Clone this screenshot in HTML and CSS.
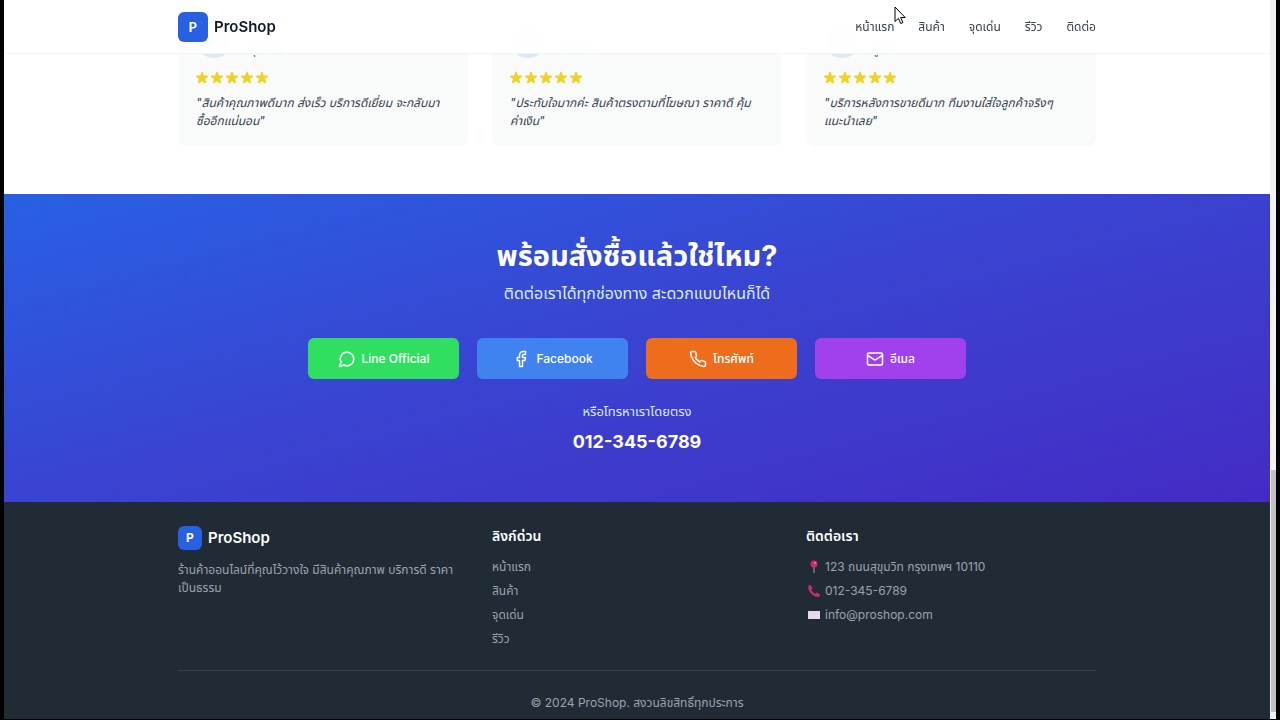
FILE: index.html
```html
<!DOCTYPE html>
<html lang="th">
<head>
<meta charset="utf-8">
<meta name="viewport" content="width=device-width, initial-scale=1">
<title>ProShop</title>
<link rel="stylesheet" href="styles.css">
</head>
<body>
<svg class="defs" aria-hidden="true">
  <symbol id="star" viewBox="1.5 1.5 17 17"><path d="M9.05 2.93c.3-.92 1.6-.92 1.9 0l1.07 3.29a1 1 0 0 0 .95.69h3.46c.97 0 1.37 1.24.59 1.81l-2.8 2.03a1 1 0 0 0-.36 1.12l1.07 3.29c.3.92-.76 1.69-1.54 1.12l-2.8-2.03a1 1 0 0 0-1.18 0l-2.8 2.03c-.78.57-1.83-.2-1.54-1.12l1.07-3.29a1 1 0 0 0-.36-1.12L2.98 8.72c-.78-.57-.38-1.81.59-1.81h3.46a1 1 0 0 0 .95-.69z"/></symbol>
</svg>
<div class="frame">
  <div class="page">
    <header class="header">
      <div class="container header-row">
        <a class="brand" href="#"><span class="mark">P</span><span>ProShop</span></a>
        <nav class="nav">
          <a href="#">หน้าแรก</a><a href="#">สินค้า</a><a href="#">จุดเด่น</a><a href="#">รีวิว</a><a href="#">ติดต่อ</a>
        </nav>
      </div>
    </header>
    <main>
      <section class="reviews">
        <div class="container cards">
          <article class="card">
            <div class="person"><span class="avatar"></span><span class="place">กรุงเทพฯ</span></div>
            <div class="stars"><svg><use href="#star"/></svg><svg><use href="#star"/></svg><svg><use href="#star"/></svg><svg><use href="#star"/></svg><svg><use href="#star"/></svg></div>
            <p class="quote">"สินค้าคุณภาพดีมาก ส่งเร็ว บริการดีเยี่ยม จะกลับมาซื้ออีกแน่นอน"</p>
          </article>
          <article class="card">
            <div class="person"><span class="avatar"></span><span class="place">เชียงใหม่</span></div>
            <div class="stars"><svg><use href="#star"/></svg><svg><use href="#star"/></svg><svg><use href="#star"/></svg><svg><use href="#star"/></svg><svg><use href="#star"/></svg></div>
            <p class="quote">"ประทับใจมากค่ะ สินค้าตรงตามที่โฆษณา ราคาดี คุ้ม<wbr><span class="keep">ค่าเงิน"</span></p>
          </article>
          <article class="card">
            <div class="person"><span class="avatar"></span><span class="place">ภูเก็ต</span></div>
            <div class="stars"><svg><use href="#star"/></svg><svg><use href="#star"/></svg><svg><use href="#star"/></svg><svg><use href="#star"/></svg><svg><use href="#star"/></svg></div>
            <p class="quote">"บริการหลังการขายดีมาก ทีมงานใส่ใจลูกค้าจริงๆ แนะนำเลย"</p>
          </article>
        </div>
      </section>
      <section class="cta">
        <h2>พร้อมสั่งซื้อแล้วใช่ไหม?</h2>
        <p class="lead">ติดต่อเราได้ทุกช่องทาง สะดวกแบบไหนก็ได้</p>
        <div class="channels">
          <a class="channel line" href="#"><svg viewBox="0 0 24 24"><path d="M7.9 20A9 9 0 1 0 4 16.1L2 22Z"/></svg>Line Official</a>
          <a class="channel facebook" href="#"><svg viewBox="0 0 24 24"><path d="M18 2h-3a5 5 0 0 0-5 5v3H7v4h3v8h4v-8h3l1-4h-4V7a1 1 0 0 1 1-1h3z"/></svg>Facebook</a>
          <a class="channel phone" href="#"><svg viewBox="0 0 24 24"><path d="M22 16.92v3a2 2 0 0 1-2.18 2 19.79 19.79 0 0 1-8.63-3.07 19.5 19.5 0 0 1-6-6 19.79 19.79 0 0 1-3.07-8.67A2 2 0 0 1 4.11 2h3a2 2 0 0 1 2 1.72 12.84 12.84 0 0 0 .7 2.81 2 2 0 0 1-.45 2.11L8.09 9.91a16 16 0 0 0 6 6l1.27-1.27a2 2 0 0 1 2.11-.45 12.84 12.84 0 0 0 2.81.7A2 2 0 0 1 22 16.92z"/></svg>โทรศัพท์</a>
          <a class="channel email" href="#"><svg viewBox="0 0 24 24"><rect x="2" y="4" width="20" height="16" rx="2"/><path d="m22 7-8.97 5.7a1.94 1.94 0 0 1-2.06 0L2 7"/></svg>อีเมล</a>
        </div>
        <p class="direct">หรือโทรหาเราโดยตรง</p>
        <a class="number" href="#">012-345-6789</a>
      </section>
    </main>
    <footer class="footer">
      <div class="container">
        <div class="columns">
          <div>
            <a class="brand brand-small" href="#"><span class="mark">P</span><span>ProShop</span></a>
            <p class="about">ร้านค้าออนไลน์ที่คุณไว้วางใจ มีสินค้าคุณภาพ บริการดี ราคาเป็นธรรม</p>
          </div>
          <div>
            <h3>ลิงก์ด่วน</h3>
            <ul><li><a href="#">หน้าแรก</a></li><li><a href="#">สินค้า</a></li><li><a href="#">จุดเด่น</a></li><li><a href="#">รีวิว</a></li></ul>
          </div>
          <div>
            <h3>ติดต่อเรา</h3>
            <ul class="contact">
              <li><svg viewBox="0 0 14 14"><path d="M7 6v7" stroke="#8b96a3" stroke-width="1.2"/><circle cx="7" cy="4" r="3.5" fill="#d72668"/><circle cx="8" cy="3" r="1" fill="#f07caa"/></svg>123 ถนนสุขุมวิท กรุงเทพฯ 10110</li>
              <li><svg viewBox="0 0 14 14"><path fill="#c52a78" d="M1.4 1.6 3.7.9 5.6 4.2 4.3 5.7Q5.5 8.2 8 9.7L9.8 8.5 13 10.6 12.6 12.6Q10.2 13.7 7.2 12 .3 7.9 1.4 1.6Z"/></svg>012-345-6789</li>
              <li><svg viewBox="0 0 14 14"><path fill="#e9d8ee" d="M1 3h12v8H1z"/><path d="m1 3 6 4 6-4" fill="none" stroke="#dfc9e8" stroke-width=".6"/></svg>info@proshop.com</li>
            </ul>
          </div>
        </div>
        <p class="copyright">© 2024 ProShop. สงวนลิขสิทธิ์ทุกประการ</p>
      </div>
    </footer>
  </div>
  <div class="scrollbar"><div class="thumb"></div></div>
</div>
<svg class="cursor" viewBox="0 0 12 19" aria-hidden="true"><path d="M1 1v14.5l3.4-3.2 2.3 5.2 2.2-1-2.3-5h4.6z" fill="#fff" stroke="#000"/></svg>
</body>
</html>
```
FILE: styles.css
```css
* { box-sizing: border-box; }
body {
  margin: 0;
  background: #000;
  font-family: Inter, "Noto Sans Thai", "Leelawadee UI", Tahoma, "Noto Sans", sans-serif;
  font-size: 12px;
  line-height: 18px;
  color: #1f2937;
}
h2, h3, p, ul { margin: 0; padding: 0; }
ul { list-style: none; }
a { color: inherit; text-decoration: none; }
.defs { position: absolute; width: 0; height: 0; }
.frame { display: flex; height: 100vh; padding: 0 4px 1px; }
.page { flex: 1; position: relative; overflow: hidden; background: #fff; display: flex; flex-direction: column; }
.container { width: 100%; max-width: 918px; margin: 0 auto; }

.header {
  position: absolute; top: 0; left: 0; right: 0; z-index: 2;
  background: rgba(255, 255, 255, .95);
  backdrop-filter: blur(4px);
  border-bottom: 1px solid #f1f3f5;
}
.header-row { display: flex; justify-content: space-between; align-items: center; height: 53px; }
.brand { display: flex; align-items: center; gap: 6px; font-size: 15px; font-weight: 600; color: #111827; }
.mark { display: grid; place-items: center; width: 30px; height: 30px; border-radius: 6px; background: #2760e0; color: #fff; font-size: 13px; font-weight: 700; }
.nav { display: flex; gap: 24px; color: #374151; }

.reviews { padding: 4px 0 48px; }
.cards, .columns { display: grid; grid-template-columns: repeat(3, 1fr); gap: 24px; }
.card { padding: 18px 18px 16px; border-radius: 8px; background: #f8fbfa; }
.person { display: flex; gap: 12px; align-items: flex-end; height: 36px; margin-bottom: 12px; }
.avatar { width: 36px; height: 36px; border-radius: 50%; background: #dfe8f8; }
.place { font-size: 11px; line-height: 16px; color: #4b5563; }
.stars { display: flex; gap: 1px; margin-bottom: 8px; margin-left: -1px; }
.stars svg { width: 14px; height: 16px; fill: #f2d024; overflow: visible; }
.quote { font-style: italic; color: #374151; }
.keep { white-space: nowrap; }

.cta { padding: 42px 0 47px; text-align: center; color: #fff; background: linear-gradient(165deg, #2860e4, #3a42d0 50%, #432bc4); }
.cta h2 { font-size: 29px; line-height: 39px; font-weight: 700; }
.lead { margin-top: 6px; font-size: 16px; line-height: 24px; color: #dbeafe; }
.channels { display: grid; grid-template-columns: repeat(4, 1fr); gap: 18px; max-width: 658px; margin: 33px auto 23px; }
.channel { display: flex; justify-content: center; align-items: center; gap: 6px; height: 41px; border-radius: 6px; font-size: 12px; font-weight: 500; }
.channel svg { width: 18px; height: 18px; fill: none; stroke: currentColor; stroke-width: 2; stroke-linecap: round; stroke-linejoin: round; }
.line { background: #31df60; }
.facebook { background: #4083f0; }
.phone { background: #ed6d1d; }
.email { background: #a141ee; }
.direct { font-size: 13px; color: #dbeafe; }
.number { display: block; margin-top: 9px; font-size: 18px; line-height: 26px; font-weight: 700; }

.footer { flex: 1; padding-top: 24px; background: #212b35; color: #9ca3af; }
.brand-small { color: #fff; }
.brand-small .mark { width: 24px; height: 24px; font-size: 12px; }
.about { margin-top: 11px; }
.footer h3 { margin-bottom: 12px; font-size: 14px; line-height: 20px; font-weight: 600; color: #fff; }
.footer ul { display: grid; gap: 6px; }
.contact li { display: flex; align-items: center; gap: 4px; }
.contact svg { width: 14px; height: 14px; margin-left: 1px; }
.copyright { margin-top: 22px; padding-top: 23px; border-top: 1px solid #35404b; text-align: center; }

.scrollbar { display: flex; flex-direction: column; justify-content: flex-end; width: 6px; padding: 0 0 7px 1px; background: #f1f1f1; }
.thumb { height: 34%; background: #c1c1c1; }
.cursor { position: absolute; left: 894px; top: 6px; z-index: 3; width: 12px; height: 19px; }
```
